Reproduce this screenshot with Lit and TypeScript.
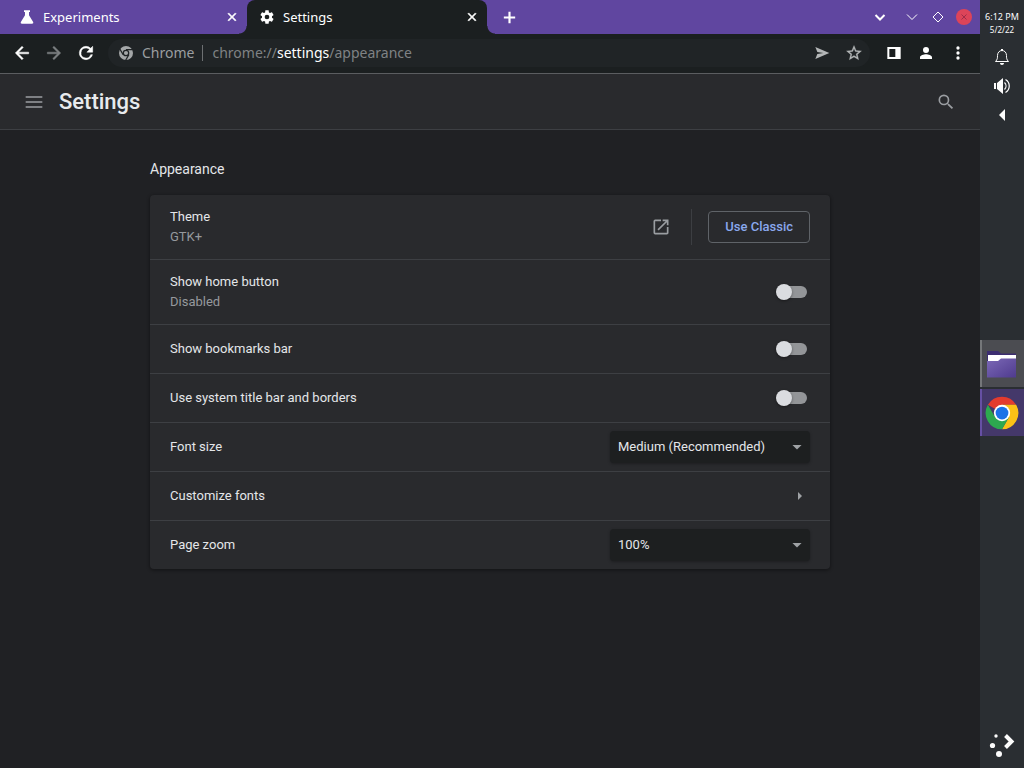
import { LitElement, html, css, nothing } from "lit";
import { customElement, property, state } from "lit/decorators.js";
import { classMap } from "lit/directives/class-map.js";

const paths: Record<string, string> = {
  close: "M19 6.41L17.59 5 12 10.59 6.41 5 5 6.41 10.59 12 5 17.59 6.41 19 12 13.41 17.59 19 19 17.59 13.41 12z",
  back: "M20 11H7.83l5.59-5.59L12 4l-8 8 8 8 1.41-1.41L7.83 13H20v-2z",
  forward: "M12 4l-1.41 1.41L16.17 11H4v2h12.17l-5.58 5.59L12 20l8-8z",
  reload: "M17.65 6.35A7.958 7.958 0 0 0 12 4a8 8 0 1 0 7.73 10h-2.08A6 6 0 1 1 12 6c1.66 0 3.14.69 4.22 1.78L13 11h7V4l-2.35 2.35z",
  gear: "M19.43 12.98c.04-.32.07-.64.07-.98s-.03-.66-.07-.98l2.11-1.65c.19-.15.24-.42.12-.64l-2-3.46c-.12-.22-.39-.3-.61-.22l-2.49 1c-.52-.4-1.08-.73-1.69-.98l-.38-2.65C14.46 2.18 14.25 2 14 2h-4c-.25 0-.46.18-.49.42l-.38 2.65c-.61.25-1.17.59-1.69.98l-2.49-1c-.23-.09-.49 0-.61.22l-2 3.46c-.13.22-.07.49.12.64l2.11 1.65c-.04.32-.07.65-.07.98s.03.66.07.98l-2.11 1.65c-.19.15-.24.42-.12.64l2 3.46c.12.22.39.3.61.22l2.49-1c.52.4 1.08.73 1.69.98l.38 2.65c.03.24.24.42.49.42h4c.25 0 .46-.18.49-.42l.38-2.65c.61-.25 1.17-.59 1.69-.98l2.49 1c.23.09.49 0 .61-.22l2-3.46c.12-.22.07-.49-.12-.64l-2.11-1.65zM12 15.5a3.5 3.5 0 1 1 0-7 3.5 3.5 0 0 1 0 7z",
  flask: "M7.500 2h9v2.500h-1.500v5l6 9.500c1 1.600.2 3-1.500 3h-15c-1.700 0-2.500-1.400-1.500-3l6-9.500v-5h-1.500z",
  send: "M2 3l21 9-21 9 3-7.500L14 12 5 10.500z",
  star: "M22 9.24l-7.190-.62L12 2 9.190 8.630 2 9.240l5.460 4.730L5.820 21 12 17.270 18.180 21l-1.630-7.030L22 9.240zM12 15.400l-3.760 2.270 1-4.280-3.320-2.880 4.380-.38L12 6.100l1.710 4.040 4.380.38-3.320 2.880 1 4.280L12 15.400z",
  panel: "M2 3h20v18H2zM5 6v12h9V6z",
  person: "M12 12a4.500 4.500 0 1 0 0-9 4.500 4.500 0 0 0 0 9zm0 2c-3.300 0-9 1.600-9 4.600V21h18v-2.400c0-3-5.700-4.600-9-4.600z",
  dots: "M12 8a2 2 0 1 0 0-4 2 2 0 0 0 0 4zm0 2a2 2 0 1 0 0 4 2 2 0 0 0 0-4zm0 6a2 2 0 1 0 0 4 2 2 0 0 0 0-4z",
  plus: "M20 13.500h-6.500V20h-3v-6.500H4v-3h6.500V4h3v6.500H20z",
  menu: "M2 19h20v-2H2v2zm0-6h20v-2H2v2zM2 5v2h20V5H2z",
  search: "M15.500 14h-.79l-.28-.27A6.471 6.471 0 0 0 16 9.500 6.500 6.500 0 1 0 9.500 16c1.610 0 3.090-.59 4.230-1.570l.27.28v.79l5 4.990L20.490 19l-4.990-5zm-6 0a4.500 4.500 0 1 1 0-9 4.500 4.500 0 0 1 0 9z",
  open: "M19 19H5V5h7V3H5a2 2 0 0 0-2 2v14a2 2 0 0 0 2 2h14c1.100 0 2-.9 2-2v-7h-2v7zM14 3v2h3.590l-9.830 9.830 1.410 1.410L19 6.410V10h2V3h-7z",
  down: "M6.500 9.500l5.500 5.500 5.500-5.500z",
  right: "M8 4l8 8-8 8z",
};

const icon = (name: string, size: number, weight = 0) => html`
  <svg width=${size} height=${size} viewBox="0 0 24 24" aria-hidden="true">
    <path fill="currentColor" stroke="currentColor" stroke-width=${weight} fill-rule="evenodd" d=${paths[name]}></path>
  </svg>`;

const stroked = (d: string, size: number, width: number) => html`
  <svg width=${size} height=${size} viewBox="0 0 16 16" aria-hidden="true">
    <path fill="none" stroke="currentColor" stroke-width=${width} d=${d}></path>
  </svg>`;

const base = css`
  * { box-sizing: border-box; }
  svg { display: block; flex: none; }
  button {
    display: grid;
    place-items: center;
    margin: 0;
    padding: 0;
    border: 0;
    background: none;
    color: inherit;
    font: inherit;
  }
`;

@customElement("tab-strip")
class TabStrip extends LitElement {
  @state() private active = 1;

  static styles = [base, css`
    :host {
      display: flex;
      align-items: center;
      height: 34px;
      padding: 0 8px 0 7px;
      background: #6046a0;
      color: #fff;
      font: 13px/18px "Noto Sans", sans-serif;
    }
    .tabs { display: flex; height: 34px; flex: 0 1 480px; min-width: 0; }
    .tab {
      position: relative;
      display: flex;
      align-items: center;
      flex: 1 1 0;
      min-width: 0;
      gap: 8px;
      padding: 0 6px 0 12px;
      border-radius: 8px 8px 0 0;
    }
    .tab.active { background: #1b1f20; }
    .tab.active::before, .tab.active::after {
      content: "";
      position: absolute;
      bottom: 0;
      width: 8px;
      height: 8px;
    }
    .tab.active::before { right: 100%; background: radial-gradient(circle at 0 0, transparent 7px, #1b1f20 8px); }
    .tab.active::after { left: 100%; background: radial-gradient(circle at 100% 0, transparent 7px, #1b1f20 8px); }
    .title { flex: 1; min-width: 0; overflow: hidden; white-space: nowrap; text-align: left; display: block; }
    .close { width: 18px; height: 18px; }
    .new { width: 28px; height: 28px; margin-left: 8px; }
    .window { display: flex; align-items: center; gap: 10px; margin-left: auto; }
    .window button { width: 16px; height: 16px; }
    .window .list { margin-right: 6px; }
    .window .quit { border-radius: 50%; background: #dd4459; color: #a02c48; }
  `];

  render() {
    const tabs = [["flask", "Experiments"], ["gear", "Settings"]];
    return html`
      <div class="tabs" role="tablist">
        ${tabs.map(([glyph, title], i) => html`
          <div class=${classMap({ tab: true, active: this.active === i })}>
            ${icon(glyph, 16)}
            <button class="title" role="tab" aria-selected=${this.active === i} @click=${() => (this.active = i)}>${title}</button>
            <button class="close" aria-label="Close tab">${icon("close", 14, 1)}</button>
          </div>`)}
      </div>
      <button class="new" aria-label="New tab">${icon("plus", 17)}</button>
      <div class="window">
        <button class="list" aria-label="Search tabs">${stroked("M3.500 6L8 10.500 12.500 6", 16, 2)}</button>
        <button aria-label="Minimize">${stroked("M3 5.500L8 10.500 13 5.500", 16, 1)}</button>
        <button aria-label="Maximize">${stroked("M8 3L13 8 8 13 3 8z", 16, 1)}</button>
        <button class="quit" aria-label="Close">${stroked("M5.500 5.500l5 5M10.500 5.500l-5 5", 16, 1)}</button>
      </div>`;
  }
}

@customElement("nav-bar")
class NavBar extends LitElement {
  static styles = [base, css`
    :host {
      display: flex;
      align-items: center;
      height: 40px;
      padding: 0 8px 1px;
      border-bottom: 1px solid #5b5d60;
      background: #1b1f20;
      color: #fff;
      font: 14px/20px "Noto Sans", sans-serif;
    }
    .group { display: flex; gap: 4px; }
    .group button { width: 28px; height: 28px; }
    .group .dim { color: #7d8082; }
    .address {
      display: flex;
      align-items: center;
      flex: 1;
      min-width: 0;
      height: 28px;
      margin: 0 10px 0 8px;
      padding: 0 2px 0 10px;
      border-radius: 14px;
      background: #202426;
      color: #9b9ea0;
    }
    .chip { margin-left: 8px; padding-right: 8px; border-right: 1px solid #6d7072; line-height: 16px; }
    .field { display: grid; flex: 1; min-width: 0; margin-left: 9px; align-items: center; }
    .field > * { grid-area: 1 / 1; }
    .url { pointer-events: none; color: #7f8284; white-space: nowrap; }
    .host { color: #fff; }
    input { width: 100%; min-width: 0; padding: 0; border: 0; outline: 0; background: none; color: #fff; font: inherit; }
    .address button { width: 28px; height: 28px; margin-left: 4px; color: #b4b7b8; }
  `];

  render() {
    return html`
      <div class="group">
        <button aria-label="Back">${icon("back", 20, 0.6)}</button>
        <button class="dim" aria-label="Forward">${icon("forward", 20, 0.6)}</button>
        <button aria-label="Reload">${icon("reload", 20, 0.6)}</button>
      </div>
      <div class="address">
        <svg width="16" height="16" viewBox="0 0 16 16" aria-hidden="true">
          <circle cx="8" cy="8" r="7" fill="#a4a7a8"></circle>
          <circle cx="8" cy="8" r="2.700" fill="none" stroke="#202426" stroke-width="1.300"></circle>
          <path d="M8 4.700H15M5.100 9.600L1.700 3.700M10.900 9.600L7.500 15.500" stroke="#202426" stroke-width="1.200"></path>
        </svg>
        <span class="chip">Chrome</span>
        <div class="field">
          <input type="text" aria-label="Address and search bar" />
          <span class="url">chrome://<span class="host">settings</span>/appearance</span>
        </div>
        <button aria-label="Share this page">${icon("send", 16)}</button>
        <button aria-label="Bookmark this tab">${icon("star", 18, 0.4)}</button>
      </div>
      <div class="group">
        <button aria-label="Side panel">${icon("panel", 16)}</button>
        <button aria-label="Profile">${icon("person", 16)}</button>
        <button aria-label="Menu">${icon("dots", 20)}</button>
      </div>`;
  }
}

@customElement("settings-row")
class SettingsRow extends LitElement {
  @property() label = "";
  @property() sub = "";
  @property() kind = "";
  @property() value = "";

  static styles = [base, css`
    :host {
      display: flex;
      align-items: center;
      padding: 0 20px;
      color: #e4e6e9;
      font: 13px/20px Roboto, sans-serif;
    }
    .row { display: flex; flex: 1; align-items: center; min-width: 0; min-height: 48px; }
    .tall { min-height: 64px; }
    .text { flex: 1; min-width: 0; }
    .sub { color: #96999d; }
    .external { width: 36px; height: 36px; color: #9a9da1; }
    .rule { width: 1px; height: 36px; margin: 0 16px 0 12px; background: #3c3e42; }
    .classic {
      height: 32px;
      padding: 0 16px;
      border: 1px solid #5f6368;
      border-radius: 4px;
      color: #8aa8ee;
      font-weight: 500;
    }
    .toggle {
      appearance: none;
      display: flex;
      align-items: center;
      width: 28px;
      height: 12px;
      margin: 0 3px;
      border-radius: 6px;
      background: #939598;
    }
    .toggle::before {
      content: "";
      width: 16px;
      height: 16px;
      flex: none;
      margin-left: -3px;
      border-radius: 50%;
      background: #dadce0;
      box-shadow: 0 1px 3px rgba(0, 0, 0, 0.4);
    }
    .toggle:checked { background: #5f7fb8; }
    .toggle:checked::before { margin-left: 15px; background: #8ab4f8; }
    .drop { display: grid; width: 200px; align-items: center; color: #9fa2a5; }
    .drop > * { grid-area: 1 / 1; }
    .drop svg { justify-self: end; margin-right: 3px; pointer-events: none; }
    select {
      appearance: none;
      width: 100%;
      height: 32px;
      padding: 0 24px 0 8px;
      border: 0;
      border-radius: 4px;
      background: #1d1f20;
      box-shadow: 0 1px 3px rgba(0, 0, 0, 0.3);
      color: #e4e6e9;
      font: inherit;
    }
    .arrow { width: 20px; height: 36px; color: #9fa2a5; }
  `];

  private control() {
    switch (this.kind) {
      case "theme":
        return html`
          <button class="external" aria-label="Open theme store">${icon("open", 20)}</button>
          <span class="rule"></span>
          <button class="classic">Use Classic</button>`;
      case "toggle":
        return html`<input class="toggle" id="control" type="checkbox" role="switch" />`;
      case "select":
        return html`
          <span class="drop">
            <select id="control"><option>${this.value}</option></select>
            ${icon("down", 20)}
          </span>`;
      case "link":
        return html`<button class="arrow" aria-label=${this.label}>${icon("right", 12)}</button>`;
    }
    return nothing;
  }

  render() {
    const bound = this.kind === "toggle" || this.kind === "select";
    return html`
      <div class=${classMap({ row: true, tall: this.sub !== "" })}>
        <div class="text">
          ${bound ? html`<label for="control">${this.label}</label>` : html`<span>${this.label}</span>`}
          ${this.sub ? html`<div class="sub">${this.sub}</div>` : nothing}
        </div>
        ${this.control()}
      </div>`;
  }
}

@customElement("settings-page")
class SettingsPage extends LitElement {
  static styles = [base, css`
    :host { display: flex; flex-direction: column; flex: 1; background: #202124; color: #e4e6e9; font-family: Roboto, sans-serif; }
    header {
      display: flex;
      align-items: center;
      height: 56px;
      padding: 0 16px;
      border-bottom: 1px solid #3d3f43;
      background: #292a2d;
      color: #9a9da1;
    }
    header button { width: 36px; height: 36px; }
    h1 { flex: 1; margin: 0 0 0 7px; color: #e8eaed; font-size: 22px; line-height: 33px; font-weight: 500; }
    main { width: 100%; max-width: 712px; margin: 0 auto; padding: 29px 16px 24px; }
    h2 { margin: 0 0 16px; font-size: 14px; line-height: 20px; font-weight: 400; }
    .card { border-radius: 4px; background: #292a2d; box-shadow: 0 1px 3px 1px rgba(0, 0, 0, 0.3); }
    settings-row + settings-row { border-top: 1px solid #3d3f43; }
  `];

  render() {
    return html`
      <header>
        <button aria-label="Main menu">${icon("menu", 20)}</button>
        <h1>Settings</h1>
        <button aria-label="Search settings">${icon("search", 20)}</button>
      </header>
      <main>
        <h2>Appearance</h2>
        <div class="card">
          <settings-row label="Theme" sub="GTK+" kind="theme"></settings-row>
          <settings-row label="Show home button" sub="Disabled" kind="toggle"></settings-row>
          <settings-row label="Show bookmarks bar" kind="toggle"></settings-row>
          <settings-row label="Use system title bar and borders" kind="toggle"></settings-row>
          <settings-row label="Font size" kind="select" value="Medium (Recommended)"></settings-row>
          <settings-row label="Customize fonts" kind="link"></settings-row>
          <settings-row label="Page zoom" kind="select" value="100%"></settings-row>
        </div>
      </main>`;
  }
}

@customElement("desktop-panel")
class DesktopPanel extends LitElement {
  static styles = [base, css`
    :host {
      display: grid;
      grid-template-rows: 1fr auto 1fr;
      padding: 8px 0 0;
      background: #2a2e32;
      color: #fcfcfc;
      font-family: "Noto Sans", sans-serif;
      text-align: center;
    }
    .status { display: flex; flex-direction: column; align-items: center; }
    .time { font-size: 9px; line-height: 18px; white-space: nowrap; }
    .date { font-size: 8px; line-height: 8px; margin-bottom: 8px; }
    .status button { width: 32px; height: 29px; }
    .tasks { display: grid; gap: 2px; }
    .task { width: 100%; height: 47px; background: #4b4c51; box-shadow: inset 2px 0 #75777a; }
    .task.current { background: #44386a; box-shadow: inset 2px 0 #6650a4; }
    .launcher { align-self: end; width: 44px; height: 50px; }
  `];

  render() {
    return html`
      <div class="status">
        <div class="time">6:12 PM</div>
        <div class="date">5/2/22</div>
        <button aria-label="Notifications">
          <svg width="16" height="18" viewBox="0 0 16 18">
            <path fill="none" stroke="currentColor" d="M1.500 13.500h13C12.500 11.500 12.500 10 12.500 7.500 12.500 4.500 10.500 2.500 8 2.500S3.500 4.500 3.500 7.500c0 2.500 0 4-2 6z"></path>
            <path fill="currentColor" d="M7 1h2v2H7zM6 15h4c0 1.200-.8 2-2 2s-2-.8-2-2z"></path>
          </svg>
        </button>
        <button aria-label="Volume">
          <svg width="18" height="18" viewBox="0 0 18 18">
            <path fill="currentColor" d="M1 6h2v6H1zM4 6l6-5v16l-6-5z"></path>
            <path fill="none" stroke="currentColor" stroke-width="1.200" d="M11.500 5.500c2 2 2 5 0 7M12.500 2.500c5 3 5 10 0 13"></path>
          </svg>
        </button>
        <button aria-label="Show hidden icons">
          <svg width="16" height="16" viewBox="0 0 16 16"><path fill="currentColor" d="M11 2v12L5 8z"></path></svg>
        </button>
      </div>
      <div class="tasks">
        <button class="task" aria-label="Files">
          <svg width="32" height="32" viewBox="0 0 32 32">
            <defs><linearGradient id="folder" x2="1" y2="1"><stop stop-color="#7b68b6"></stop><stop offset="1" stop-color="#4f3b8e"></stop></linearGradient></defs>
            <path fill="#3c2d70" d="M1 3h11l3 2.500h15V16H1z"></path>
            <path fill="#fff" d="M2 7h28v8H2z"></path>
            <path fill="url(#folder)" d="M1 13h11l3-2.500h15V29.500H1z"></path>
          </svg>
        </button>
        <button class="task current" aria-label="Chrome">
          <svg width="34" height="34" viewBox="0 0 48 48">
            <path fill="#e33b2e" d="M24 24L4.080 12.500A23 23 0 0 1 43.920 12.500H24z"></path>
            <path fill="#fbc116" d="M24 12.500h19.920A23 23 0 0 1 24 47l9.960-17.250z"></path>
            <path fill="#2da94f" d="M4.080 12.500A23 23 0 0 0 24 47l9.960-17.250L24 24l-9.960 5.750z"></path>
            <circle cx="24" cy="24" r="11.500" fill="#fff"></circle>
            <circle cx="24" cy="24" r="9" fill="#1b73e8"></circle>
          </svg>
        </button>
      </div>
      <button class="launcher" aria-label="Application launcher">
        <svg width="28" height="28" viewBox="0 0 28 28">
          <circle cx="8" cy="7" r="1.700" fill="currentColor"></circle>
          <circle cx="4.500" cy="16.500" r="2.600" fill="currentColor"></circle>
          <circle cx="11" cy="25" r="3" fill="currentColor"></circle>
          <path fill="none" stroke="currentColor" stroke-width="4" d="M17.500 6.500l6 6-6 6"></path>
        </svg>
      </button>`;
  }
}

@customElement("app-root")
class AppRoot extends LitElement {
  static styles = [base, css`
    :host { display: grid; grid-template-columns: minmax(0, 1fr) 44px; min-height: 100vh; }
    .browser { display: flex; flex-direction: column; min-width: 0; }
  `];

  render() {
    return html`
      <div class="browser">
        <tab-strip></tab-strip>
        <nav-bar></nav-bar>
        <settings-page></settings-page>
      </div>
      <desktop-panel></desktop-panel>`;
  }
}
